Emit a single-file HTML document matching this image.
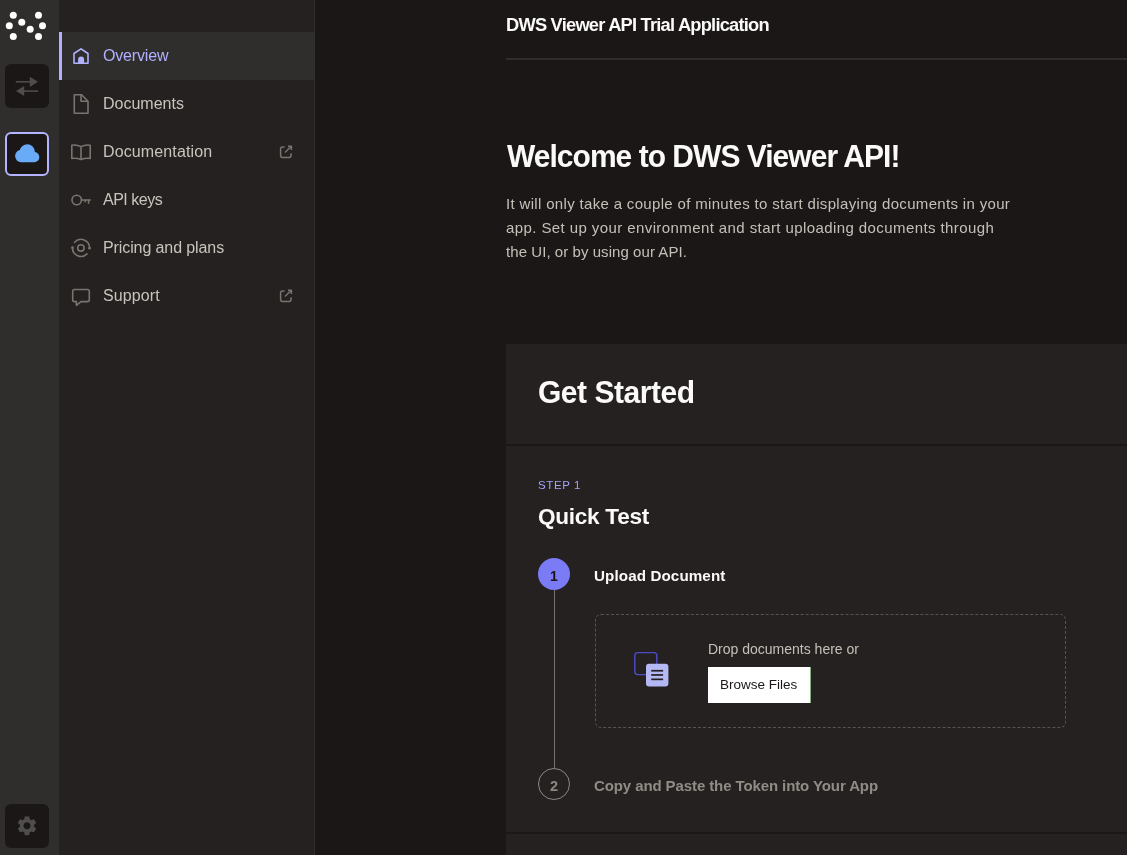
<!DOCTYPE html>
<html><head><meta charset="utf-8">
<style>
*{box-sizing:border-box;margin:0;padding:0}
html,body{width:1127px;height:855px;overflow:hidden;background:#1a1716;font-family:"Liberation Sans",sans-serif}
.a{position:absolute}
.t{position:absolute;white-space:nowrap;line-height:1;will-change:transform}
#rail{left:0;top:0;width:59px;height:855px;background:#2f2e2d}
.rbox{position:absolute;left:5px;width:44px;height:44px;background:#1a1716;border-radius:6px}
#nav{left:59px;top:0;width:256px;height:855px;background:#242120;border-right:1px solid #2f2e2d}
#active{left:59px;top:32px;width:255px;height:48px;background:#2f2e2d;border-left:3px solid #b1b1ff}
.nt{font-size:16px;color:#c8c4bc}
.ic{position:absolute;overflow:visible}
.card{position:absolute;left:506px;width:621px;background:#242120}
</style></head><body>
<div id="rail" class="a">
  <svg class="ic" style="left:0;top:0" width="59" height="59" viewBox="0 0 59 59">
    <g fill="#fff">
      <circle cx="13.3" cy="15.3" r="3.5"/><circle cx="38.5" cy="15.3" r="3.5"/>
      <circle cx="21.8" cy="22.3" r="3.5"/><circle cx="9.3" cy="25.8" r="3.5"/>
      <circle cx="30.2" cy="29.3" r="3.5"/><circle cx="42.5" cy="25.8" r="3.5"/>
      <circle cx="13.3" cy="36.5" r="3.5"/><circle cx="38.5" cy="36.5" r="3.5"/>
    </g>
  </svg>
  <div class="rbox" style="top:64px"></div>
  <svg class="ic" style="left:0;top:60px" width="59" height="50" viewBox="0 60 59 50">
    <g fill="#4f4d4b" stroke="none">
      <rect x="15.8" y="81" width="16" height="1.6"/>
      <path d="M29.8 76.8 L38 81.8 L29.8 86.9 Z"/>
      <rect x="22" y="90.3" width="16.2" height="1.6"/>
      <path d="M24.2 85.9 L16 91.1 L24.2 96 Z"/>
    </g>
  </svg>
  <div class="rbox" style="top:132px;border:2px solid #b3b3ff"></div>
  <svg class="ic" style="left:0;top:130px" width="59" height="50" viewBox="0 130 59 50">
    <path fill="#6aabf7" transform="translate(14 139.8) scale(1.1 1.12)" d="M6.5 20q-2.275 0-3.887-1.575T1 14.575q0-1.95 1.175-3.475T5.25 9.15q.625-2.3 2.5-3.725T12 4q2.925 0 4.963 2.038T19 11q1.725.2 2.863 1.488T23 15.5q0 1.875-1.312 3.188T18.5 20z"/>
  </svg>
  <div class="rbox" style="top:804px"></div>
  <svg class="ic" style="left:0;top:800px" width="59" height="55" viewBox="0 800 59 55">
    <g transform="translate(15.24 814.04) scale(0.98)"><path fill="#4f4d4b" d="M19.14 12.94c.04-.3.06-.61.06-.94 0-.32-.02-.64-.07-.94l2.03-1.58c.18-.14.23-.41.12-.61l-1.92-3.32c-.12-.22-.37-.29-.59-.22l-2.39.96c-.5-.38-1.03-.7-1.62-.94l-.36-2.54c-.04-.24-.24-.41-.48-.41h-3.84c-.24 0-.43.17-.47.41l-.36 2.54c-.59.24-1.13.57-1.62.94l-2.39-.96c-.22-.08-.47 0-.59.22L2.74 8.87c-.12.21-.08.47.12.61l2.03 1.58c-.05.3-.09.63-.09.94s.02.64.07.94l-2.03 1.58c-.18.14-.23.41-.12.61l1.920 3.32c.12.22.37.29.59.22l2.39-.96c.5.38 1.03.7 1.62.94l.36 2.54c.05.24.24.41.48.41h3.84c.24 0 .44-.17.47-.41l.36-2.54c.59-.24 1.13-.56 1.62-.94l2.39.96c.22.08.47 0 .59-.22l1.92-3.32c.12-.22.07-.47-.12-.61l-2.010-1.58zM12 15.6c-1.98 0-3.6-1.62-3.6-3.6s1.62-3.6 3.6-3.6 3.6 1.62 3.6 3.6-1.62 3.6-3.6 3.6z"/></g>
  </svg>
</div>

<div id="nav" class="a"></div>
<div id="active" class="a"></div>

<!-- nav icons -->
<svg class="ic" style="left:0;top:0" width="320" height="320" viewBox="0 0 320 320">
  <g fill="none" stroke-width="1.6" stroke-linejoin="round">
    <path stroke="#b1b1ff" d="M74 63.2 V53.5 L81 48.8 L88 53.5 V63.2 Z"/>
    <path fill="#b1b1ff" d="M78.1 63.5 V59.4 A3 3 0 0 1 84.1 59.4 V63.5 Z"/>
    <g stroke="#78746e">
      <path d="M74.3 94.8 H81.6 L88 101.3 V113.2 H74.3 Z"/>
      <path d="M81 94.8 V101.2 H88"/>
      <path d="M71.8 145.2 Q76.5 144.3 81 146.6 Q85.5 144.3 90.2 145.2 V158.4 Q85.5 157.7 81 159.6 Q76.5 157.7 71.8 158.4 Z"/>
      <path d="M81 146.6 V159.6"/>
      <circle cx="76.7" cy="200" r="4.7"/>
      <path d="M81.4 200 H90.8 M85.2 200 V202.3 M88.6 200 V203.8"/>
      <path d="M74.6 242.3 A8.5 8.5 0 0 1 89.5 248.2" stroke-linecap="round"/>
      <path d="M72.5 247.7 A8.5 8.5 0 0 0 87 253.9" stroke-linecap="round"/>
      <circle cx="80.9" cy="247.9" r="3.2"/>
      <path d="M74.5 289.5 H87.5 Q89.3 289.5 89.3 291.3 V299.8 Q89.3 301.6 87.5 301.6 H81 L76.4 305.3 V301.6 H74.5 Q72.7 301.6 72.7 299.8 V291.3 Q72.7 289.5 74.5 289.5 Z"/>
    </g>
    <g stroke="#78746e" stroke-width="1.5">
      <path d="M284.5 147 H282.4 Q280.6 147 280.6 148.8 V155.6 Q280.6 157.4 282.4 157.4 H289.2 Q291 157.4 291 155.6 V153.2"/>
      <path d="M285 152.5 L291.3 146.3 M288 146.3 H291.4 V149.9"/>
      <path d="M284.5 291 H282.4 Q280.6 291 280.6 292.8 V299.6 Q280.6 301.4 282.4 301.4 H289.2 Q291 301.4 291 299.6 V297.2"/>
      <path d="M285 296.5 L291.3 290.3 M288 290.3 H291.4 V293.9"/>
    </g>
  </g>
  <g fill="#78746e">
    <circle cx="89.5" cy="248.2" r="1.4"/>
    <circle cx="72.5" cy="247.7" r="1.4"/>
  </g>
</svg>

<div class="t nt" style="left:103px;top:48.0px;color:#b1b1ff;letter-spacing:-0.17px">Overview</div>
<div class="t nt" style="left:103px;top:96.0px">Documents</div>
<div class="t nt" style="left:103px;top:144.0px;letter-spacing:0.12px">Documentation</div>
<div class="t nt" style="left:103px;top:192.0px;letter-spacing:-0.5px">API keys</div>
<div class="t nt" style="left:103px;top:240.0px;letter-spacing:-0.1px">Pricing and plans</div>
<div class="t nt" style="left:103px;top:288.0px;letter-spacing:0.1px">Support</div>

<!-- main -->
<div class="t" style="left:505.5px;top:15.5px;font-size:18.3px;font-weight:700;letter-spacing:-0.78px;color:#fbfaf8">DWS Viewer API Trial Application</div>
<div class="a" style="left:506px;top:58px;width:621px;height:2px;background:#2f2d2c"></div>

<div class="t" style="left:507.3px;top:141.6px;font-size:30px;font-weight:700;letter-spacing:-0.98px;transform:scaleY(1.03);transform-origin:0 25.4px;color:#fbfaf8">Welcome to DWS Viewer API!</div>
<div class="t" style="left:506px;top:196.3px;font-size:15px;color:#c4c0b8;letter-spacing:0.33px">It will only take a couple of minutes to start displaying documents in your</div>
<div class="t" style="left:506px;top:220.3px;font-size:15px;color:#c4c0b8;letter-spacing:0.41px">app. Set up your environment and start uploading documents through</div>
<div class="t" style="left:506px;top:244.3px;font-size:15px;color:#c4c0b8;letter-spacing:0.06px">the UI, or by using our API.</div>

<div class="card" style="top:344px;height:100px"></div>
<div class="card" style="top:446px;height:386px"></div>
<div class="card" style="top:834px;height:21px"></div>

<div class="t" style="left:538.3px;top:377.8px;font-size:30px;font-weight:700;letter-spacing:-0.47px;transform:scaleY(1.03);transform-origin:0 25.4px;color:#fbfaf8">Get Started</div>
<div class="t" style="left:538px;top:479.7px;font-size:11.5px;color:#a3a3f5;letter-spacing:0.6px">STEP 1</div>
<div class="t" style="left:537.5px;top:505.7px;font-size:22.6px;font-weight:700;letter-spacing:-0.29px;color:#fbfaf8">Quick Test</div>

<div class="a" style="left:553.5px;top:590px;width:1px;height:178px;background:#77736d"></div>
<div class="a" style="left:538px;top:558px;width:32px;height:32px;border-radius:50%;background:#7b7bf6"></div>
<div class="t" style="left:538px;top:568.9px;width:32px;text-align:center;font-size:14px;font-weight:700;color:#1a1716">1</div>
<div class="t" style="left:593.5px;top:567.8px;font-size:15.2px;font-weight:700;letter-spacing:0.1px;color:#fbfaf8">Upload Document</div>

<div class="a" style="left:595px;top:614px;width:471px;height:114px;border:1px dashed #58544f;border-radius:6px"></div>
<svg class="ic" style="left:620px;top:640px" width="60" height="60" viewBox="620 640 60 60">
  <rect x="634.8" y="652.6" width="22" height="22" rx="3" fill="none" stroke="#4f4bc8" stroke-width="1.4"/>
  <rect x="646" y="663.8" width="22.4" height="22.8" rx="3" fill="#b4b8f5"/>
  <g fill="#242120">
    <rect x="651.2" y="669.9" width="11.9" height="1.7"/>
    <rect x="651.2" y="674.1" width="11.9" height="1.7"/>
    <rect x="651.2" y="678.5" width="11.9" height="1.7"/>
  </g>
</svg>
<div class="t" style="left:708px;top:641.8px;font-size:14px;color:#c4c0b8">Drop documents here or</div>
<div class="a" style="left:708px;top:667px;width:102px;height:36px;background:#fff"></div>
<div class="a" style="left:810px;top:667px;width:1px;height:36px;background:#86ad80"></div>
<div class="t" style="left:720.2px;top:678px;font-size:13.5px;color:#1a1716">Browse Files</div>

<div class="a" style="left:538px;top:768px;width:32px;height:32px;border-radius:50%;border:1px solid #8c8780"></div>
<div class="t" style="left:538px;top:778.9px;width:32px;text-align:center;font-size:14.5px;font-weight:700;color:#8c8780">2</div>
<div class="t" style="left:593.5px;top:778.3px;font-size:15px;font-weight:700;letter-spacing:-0.1px;color:#908c85">Copy and Paste the Token into Your App</div>

</body></html>
